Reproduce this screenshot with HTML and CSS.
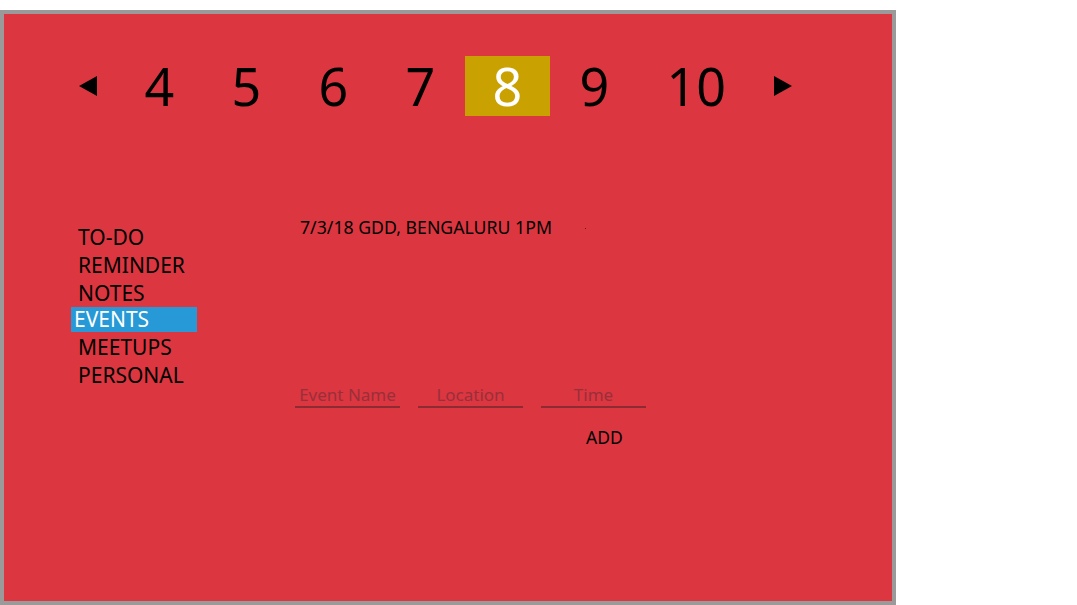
FILE: index.html
```html
<!DOCTYPE html>
<html>
<head>
<meta charset="utf-8">
<link rel="stylesheet" href="styles.css">
</head>
<body>
<div class="frame">
  <nav class="pager">
    <span class="arrow"><svg width="18" height="20" viewBox="0 0 18 20"><polygon points="18,0 18,20 0,10" fill="#000"/></svg></span>
    <div class="days">
      <span class="day">4</span>
      <span class="day">5</span>
      <span class="day">6</span>
      <span class="day">7</span>
      <span class="day active">8</span>
      <span class="day">9</span>
      <span class="day">10</span>
    </div>
    <span class="arrow"><svg width="18" height="20" viewBox="0 0 18 20"><polygon points="0,0 0,20 18,10" fill="#000"/></svg></span>
  </nav>
  <div class="content">
    <ul class="menu">
      <li>TO-DO</li>
      <li>REMINDER</li>
      <li>NOTES</li>
      <li class="active">EVENTS</li>
      <li>MEETUPS</li>
      <li>PERSONAL</li>
    </ul>
    <div class="main">
      <div class="event">
        <span class="event-text">7/3/18 GDD, BENGALURU 1PM</span>
        <span class="dot"></span>
      </div>
      <div class="form">
        <input class="field" type="text" placeholder="Event Name">
        <input class="field" type="text" placeholder="Location">
        <input class="field" type="text" placeholder="Time">
      </div>
      <div class="actions"><button class="add">ADD</button></div>
    </div>
  </div>
</div>
</body>
</html>
```

FILE: styles.css
```css
html, body {
  margin: 0;
  padding: 0;
  background: #fff;
}
body {
  font-family: "Noto Sans", "Open Sans", sans-serif;
  color: #000;
}
.frame {
  margin-top: 10px;
  width: 896px;
  height: 599px;
  background: #dc3640;
  border: 4px solid #9a9a9a;
  border-bottom-width: 8px;
  box-sizing: border-box;
}
.pager {
  display: flex;
  align-items: center;
  padding: 42px 0 0 75px;
  height: 60px;
}
.arrow {
  display: flex;
  width: 18px;
  height: 20px;
}
.days {
  display: flex;
  gap: 2.25px;
  margin: 0 20px 0 20px;
}
.day {
  font-size: 52px;
  line-height: 60px;
  height: 60px;
  padding: 0 27.5px;
}
.day.active {
  background: #c9a100;
  color: #fff;
}
.content {
  display: flex;
}
.menu {
  list-style: none;
  margin: 0;
  padding: 107px 0 0 74px;
  width: 217px;
  font-size: 21px;
}
.menu li {
  line-height: 28px;
  height: 28px;
}
.menu li.active {
  background: #2699d6;
  color: #fff;
  width: 126px;
  box-sizing: border-box;
  margin-left: -7px;
  padding-left: 3px;
  line-height: 25px;
  height: 25px;
  margin-bottom: 1px;
}
.main {
  padding-top: 100px;
  font-size: 17.7px;
}
.event {
  display: flex;
  align-items: center;
  padding-left: 5px;
  line-height: 22px;
}
.dot {
  width: 1px;
  height: 1px;
  background: #5a1a1e;
  margin-left: 33px;
  margin-top: 2px;
}
.form {
  display: flex;
  gap: 18px;
  margin-top: 145px;
}
.field {
  width: 105px;
  height: 23px;
  box-sizing: content-box;
  padding: 0;
  margin: 0;
  border: none;
  border-bottom: 2px solid #8e2a31;
  background: transparent;
  font-family: "Noto Sans", "Open Sans", sans-serif;
  font-size: 17px;
  text-align: center;
  outline: none;
}
.field::placeholder {
  color: #98303a;
}
.actions {
  margin-top: 17px;
  padding-left: 291px;
}
.add {
  background: none;
  border: none;
  padding: 0;
  margin: 0;
  font-family: "Noto Sans", "Open Sans", sans-serif;
  font-size: 17.5px;
  line-height: 22px;
  color: #000;
}
```
